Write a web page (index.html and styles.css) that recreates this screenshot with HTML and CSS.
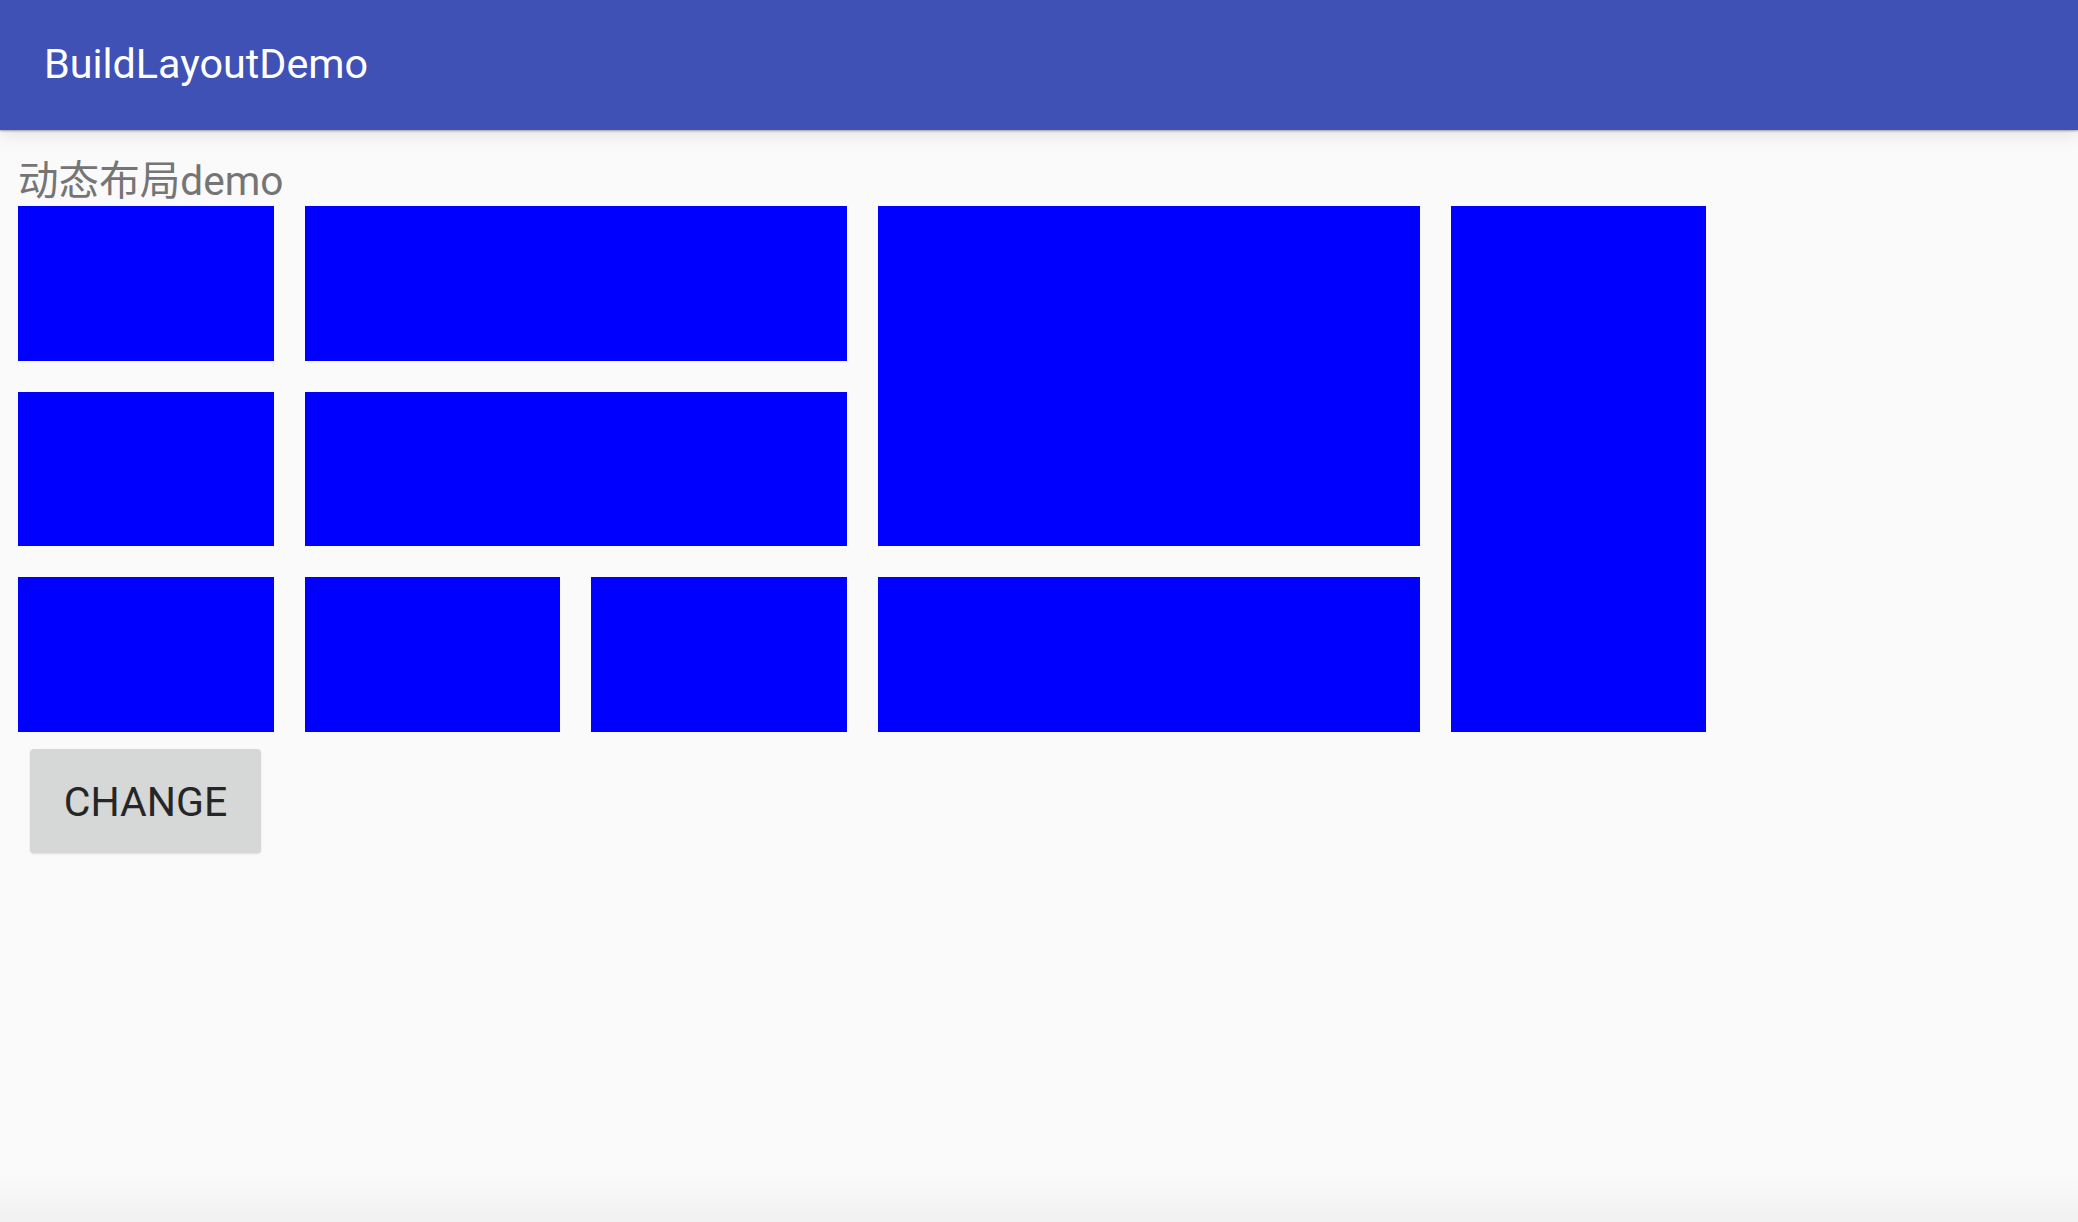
FILE: index.html
```html
<!DOCTYPE html>
<html lang="zh">
<head>
<meta charset="utf-8">
<title>BuildLayoutDemo</title>
<link rel="stylesheet" href="styles.css">
</head>
<body>
<header class="appbar">
  <h1 class="appbar-title">BuildLayoutDemo</h1>
</header>
<main class="content">
  <p class="label">动态布局demo</p>
  <div class="grid">
    <div class="cell r1 c1"></div>
    <div class="cell r1 c2-3"></div>
    <div class="cell r1-2 c4-5"></div>
    <div class="cell r1-3 c6"></div>
    <div class="cell r2 c1"></div>
    <div class="cell r2 c2-3"></div>
    <div class="cell r3 c1"></div>
    <div class="cell r3 c2"></div>
    <div class="cell r3 c3"></div>
    <div class="cell r3 c4-5"></div>
  </div>
  <button class="btn" type="button">CHANGE</button>
</main>
</body>
</html>
```

FILE: styles.css
```css
html, body {
  margin: 0;
  padding: 0;
  height: 100%;
}

body {
  background: linear-gradient(to bottom, #fafafa 0, #fafafa calc(100% - 48px), #f1f1f1 100%);
  font-family: Roboto, "Noto Sans CJK SC", sans-serif;
  display: flex;
  flex-direction: column;
}

.appbar {
  height: 130px;
  background: #3f51b5;
  display: flex;
  align-items: center;
  padding-left: 44px;
  box-sizing: border-box;
  box-shadow: 0 1px 2px rgba(0, 0, 0, 0.35), 0 4px 18px rgba(0, 0, 0, 0.10);
  position: relative;
  z-index: 1;
  flex: none;
}

.appbar-title {
  margin: 0;
  color: #ffffff;
  font-weight: 400;
  font-size: 41.3px;
  line-height: 49px;
  padding-bottom: 2px;
}

.content {
  padding: 28px 0 0 18px;
  display: flex;
  flex-direction: column;
  align-items: flex-start;
}

.label {
  margin: 0;
  font-family: Roboto, "Noto Sans CJK SC", sans-serif;
  font-size: 40.6px;
  line-height: 47px;
  color: #757575;
}

.grid {
  margin-top: 1px;
  display: grid;
  grid-template-columns: repeat(6, 255.5px);
  grid-template-rows: repeat(3, 154.5px);
  column-gap: 31px;
  row-gap: 31px;
}

.cell { background: #0000ff; }

.r1 { grid-row: 1; }
.r2 { grid-row: 2; }
.r3 { grid-row: 3; }
.r1-2 { grid-row: 1 / span 2; }
.r1-3 { grid-row: 1 / span 3; }
.c1 { grid-column: 1; }
.c2 { grid-column: 2; }
.c3 { grid-column: 3; }
.c6 { grid-column: 6; }
.c2-3 { grid-column: 2 / span 2; }
.c4-5 { grid-column: 4 / span 2; }

.btn {
  margin: 17px 0 0 12px;
  width: 231px;
  height: 104px;
  border: none;
  border-radius: 4px;
  background: #d6d7d7;
  box-shadow: 0 1px 2px rgba(0, 0, 0, 0.12);
  font-family: Roboto, sans-serif;
  font-size: 41px;
  color: #262626;
  padding: 3px 0 0 0;
}
```
